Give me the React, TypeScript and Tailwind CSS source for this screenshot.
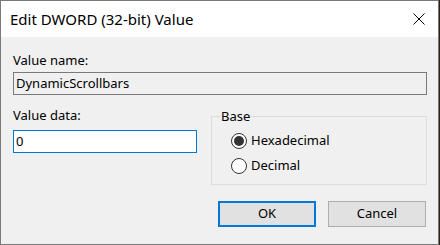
import { useState } from "react";

const Radio = ({ label, checked, onClick }: { label: string; checked: boolean; onClick: () => void }) => (
  <div className="flex h-[25px] items-center gap-[4px] cursor-default" onClick={onClick}>
    <span className="flex h-[16px] w-[16px] items-center justify-center rounded-full border border-[#333333] bg-white">
      {checked && <span className="h-[10px] w-[10px] rounded-full bg-[#333333]" />}
    </span>
    <span className="text-[13px] leading-[15px]">{label}</span>
  </div>
);

export default function App() {
  const [base, setBase] = useState("hex");

  return (
    <div className="flex h-[245px] w-[440px] bg-[#2b2118] font-['Noto_Sans',sans-serif] text-black">
      <div className="flex h-[245px] w-[439px] flex-col border border-[#7a7a7a] bg-[#f0f0f0]">
        {/* title bar */}
        <div className="flex h-[36px] items-center justify-between bg-white pl-[9px] pr-[13px]">
          <span className="text-[15px]">Edit DWORD (32-bit) Value</span>
          <svg width="12" height="12" viewBox="0 0 12 12" className="text-black">
            <path d="M0.5 0.5 L11.5 11.5 M11.5 0.5 L0.5 11.5" stroke="currentColor" strokeWidth="1" />
          </svg>
        </div>

        {/* body */}
        <div className="flex flex-1 flex-col pl-[12px] pr-[11px] pt-[16px]">
          <div className="text-[13px] leading-[15px]">Value name:</div>
          <div className="mt-[4px] flex h-[23px] items-center border border-[#7a7a7a] bg-[#f0f0f0] px-[2px] text-[13px]">
            DynamicScrollbars
          </div>

          <div className="mt-[13px] flex gap-[14px]">
            <div className="flex w-[184px] flex-col">
              <div className="text-[13px] leading-[15px]">Value data:</div>
              <div className="mt-[7px] flex h-[23px] items-center border border-[#0078d7] bg-white px-[2px] text-[13px]">
                0
              </div>
            </div>

            <fieldset className="w-[216px] border border-[#dcdcdc] pb-[6px] pl-[19px] pt-[4px]">
              <legend className="ml-[-11px] px-[1px] text-[13px] leading-[16px]">Base</legend>
              <Radio label="Hexadecimal" checked={base === "hex"} onClick={() => setBase("hex")} />
              <Radio label="Decimal" checked={base === "dec"} onClick={() => setBase("dec")} />
            </fieldset>
          </div>

          <div className="mr-[1px] mt-[16px] flex justify-end gap-[12px]">
            <button className="h-[26px] w-[98px] border-2 border-[#0078d7] bg-[#e1e1e1] text-[13px]">OK</button>
            <button className="h-[26px] w-[98px] border border-[#adadad] bg-[#e1e1e1] text-[13px]">Cancel</button>
          </div>
        </div>
      </div>
    </div>
  );
}
